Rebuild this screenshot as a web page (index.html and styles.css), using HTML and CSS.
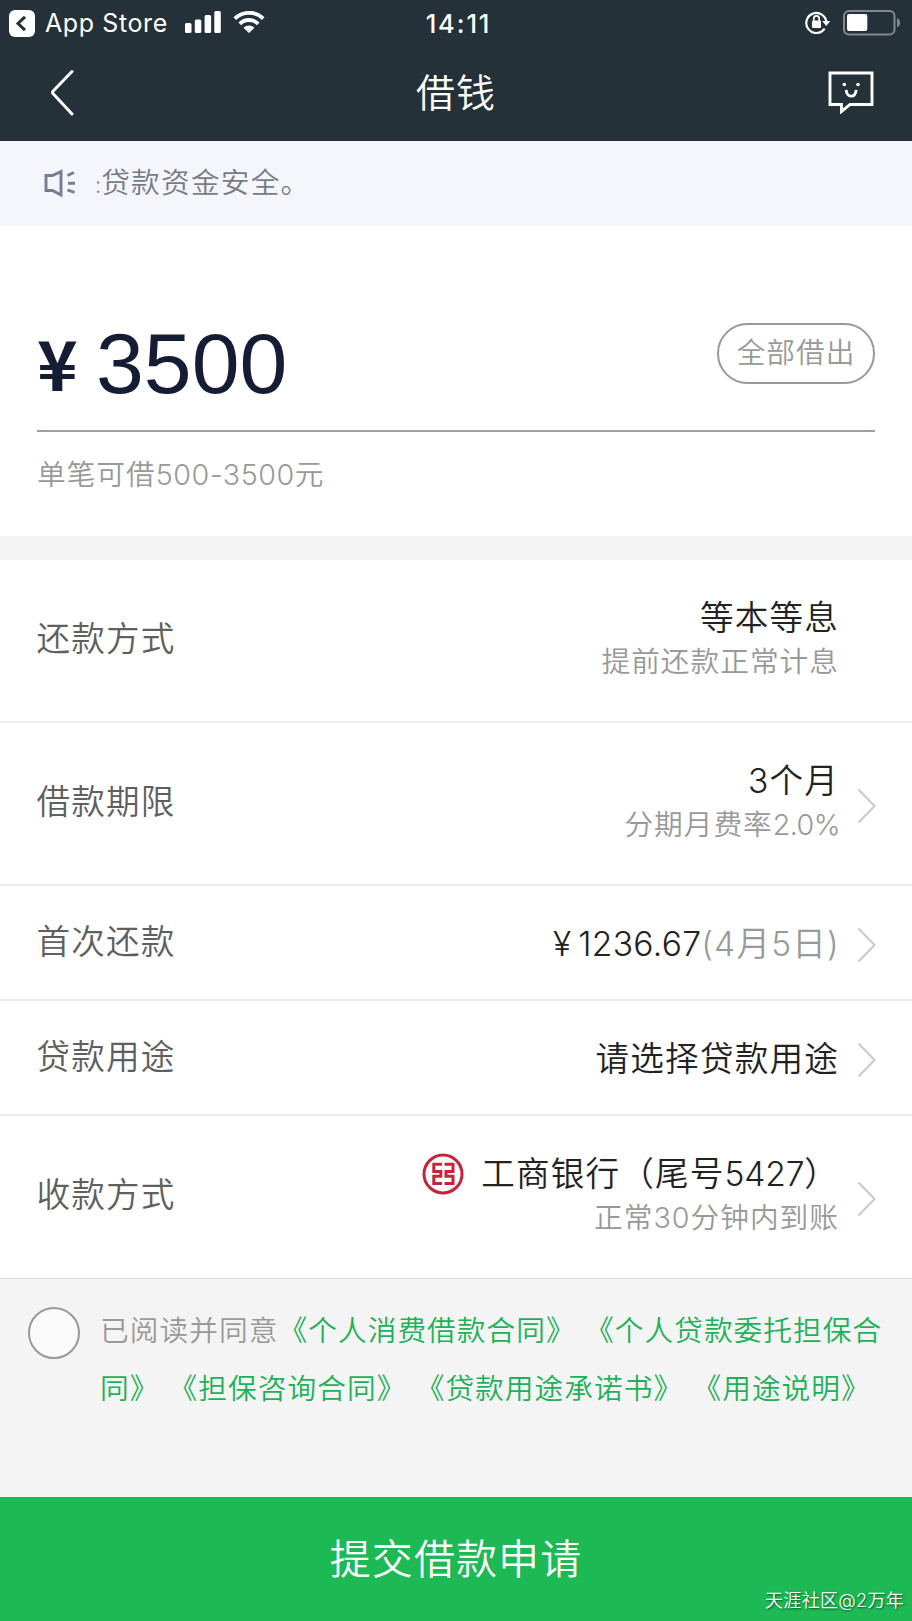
FILE: index.html
```html
<!DOCTYPE html>
<html lang="zh-CN">
<head>
<meta charset="utf-8">
<title>借钱</title>
<link rel="stylesheet" href="styles.css">
</head>
<body>
<div class="page">
  <header class="top">
    <div class="status">
      <div class="status-left">
        <svg class="back-app" viewBox="0 0 26 27" width="26" height="27"><rect width="26" height="27" rx="6" fill="#fff"/><path d="M16 6.8 9 13.5l7 6.7" fill="none" stroke="#253139" stroke-width="3"/></svg>
        <span class="app-name">App Store</span>
        <svg class="signal" viewBox="0 0 36 22" width="36" height="22" fill="#fff"><rect x="0" y="12" width="6.5" height="10" rx="1.5"/><rect x="9.8" y="8.5" width="6.5" height="13.5" rx="1.5"/><rect x="19.6" y="4" width="6.5" height="18" rx="1.5"/><rect x="29.3" y="0" width="6.5" height="22" rx="1.5"/></svg>
        <svg class="wifi" viewBox="0 0 32 22" width="32" height="22"><g fill="none" stroke="#fff" stroke-width="3.8"><path d="M1.8 7.6a20.3 20.3 0 0 1 28.4 0"/><path d="M6.8 12.8a13 13 0 0 1 18.4 0"/></g><path d="M10.5 16.7a7.8 7.8 0 0 1 11 0L16 22z" fill="#fff"/></svg>
      </div>
      <div class="clock">14:11</div>
      <div class="status-right">
        <svg class="lock" viewBox="0 0 26 24" width="26" height="24"><path d="M19.6 18.6a10 10 0 1 1 1.7-6" fill="none" stroke="#fff" stroke-width="2.2"/><path d="M17.2 11h8l-4 5z" fill="#fff"/><rect x="7" y="10.5" width="9" height="7.5" rx="1" fill="#fff"/><path d="M8.8 11V8.6a2.7 2.7 0 0 1 5.4 0V11" fill="none" stroke="#fff" stroke-width="1.7"/></svg>
        <svg class="battery" viewBox="0 0 58 26" width="58" height="26"><rect x="1" y="1" width="50.5" height="23.5" rx="5" fill="none" stroke="#838a8f" stroke-width="2"/><rect x="4" y="4" width="20.3" height="17" rx="2" fill="#fff"/><path d="M54 8.2c4 1.5 4 7.6 0 9.1z" fill="#838a8f"/></svg>
      </div>
    </div>
    <nav class="nav">
      <svg class="nav-back" viewBox="0 0 24 48" width="24" height="48"><path d="M22 2.5 3.2 22a2 2 0 0 0 0 2.8L22 45" fill="none" stroke="#fff" stroke-width="3" stroke-linecap="round"/></svg>
      <h1 class="title">借钱</h1>
      <svg class="chat" viewBox="0 0 46 43" width="46" height="43"><path d="M2 2h42v31.500H22L13.500 40.500v-7H2z" fill="none" stroke="#fff" stroke-width="2.900"/><circle cx="16.300" cy="13.500" r="1.800" fill="#fff"/><circle cx="30" cy="13.500" r="1.800" fill="#fff"/><path d="M18.200 18.800c.5 8.500 9.200 8.500 10 0" fill="none" stroke="#fff" stroke-width="2.800"/></svg>
    </nav>
  </header>

  <div class="notice">
    <svg class="speaker" viewBox="0 0 32 28" width="32" height="28" fill="none" stroke="#777c94" stroke-width="2.900"><path d="M2 6.500H8.500L17 2.500v23.500L8.500 21.500H2z"/><path d="M23.500 6.500 30 3.500M24 14.200h7M23.500 20.800l7 2.700"/></svg>
    <span class="notice-text"><span class="colon">:</span>贷款资金安全。</span>
  </div>

  <section class="amount">
    <div class="amount-line">
      <span class="yen">¥</span>
      <span class="value">3500</span>
      <button class="all">全部借出</button>
    </div>
    <p class="hint">单笔可借<span class="num">500-3500</span>元</p>
  </section>

  <section class="rows">
    <div class="row tall">
      <span class="label">还款方式</span>
      <div class="detail"><div class="main">等本等息</div><div class="sub">提前还款正常计息</div></div>
      <span class="arrow"></span>
    </div>
    <div class="row tall">
      <span class="label">借款期限</span>
      <div class="detail"><div class="main">3个月</div><div class="sub rate">分期月费率<span class="percent">2.0%</span></div></div>
      <svg class="arrow" viewBox="0 0 20 36" width="20" height="36"><path d="M1.500 1.500 17.500 18 1.500 34.500"/></svg>
    </div>
    <div class="row">
      <span class="label">首次还款</span>
      <div class="detail"><div class="main pay"><span class="pay-yen">¥</span><span class="pay-num">1236.67</span><span class="date">(4月5日)</span></div></div>
      <svg class="arrow" viewBox="0 0 20 36" width="20" height="36"><path d="M1.500 1.500 17.500 18 1.500 34.500"/></svg>
    </div>
    <div class="row">
      <span class="label">贷款用途</span>
      <div class="detail"><div class="main">请选择贷款用途</div></div>
      <svg class="arrow" viewBox="0 0 20 36" width="20" height="36"><path d="M1.500 1.500 17.500 18 1.500 34.500"/></svg>
    </div>
    <div class="row tall">
      <span class="label">收款方式</span>
      <div class="detail">
        <div class="main bank">
          <svg class="bank-logo" viewBox="0 0 42 42" width="42" height="42" fill="none" stroke="#c9233a"><circle cx="21" cy="21" r="19" stroke-width="3"/><g stroke-width="3"><path d="M20 11.300H11.800v7.200h7v4.800h-7v7.200H20"/><path d="M22.500 11.300h8.500v7.200h-7v4.800h7v7.200h-8.500"/></g></svg>
          <span>工商银行（尾号<span class="tail">5427</span>）</span>
        </div>
        <div class="sub">正常30分钟内到账</div>
      </div>
      <svg class="arrow" viewBox="0 0 20 36" width="20" height="36"><path d="M1.500 1.500 17.500 18 1.500 34.500"/></svg>
    </div>
  </section>

  <section class="agree">
    <span class="check"></span>
    <p class="terms">已阅读并同意<a>《个人消费借款合同》</a> <a>《个人贷款委托担保合<br>同》</a> <a>《担保咨询合同》</a> <a>《贷款用途承诺书》</a> <a>《用途说明》</a></p>
  </section>

  <footer class="submit">提交借款申请<span class="mark">天涯社区@2万年</span></footer>
</div>
</body>
</html>
```
FILE: styles.css
```css
* { box-sizing: border-box; }
body { margin: 0; background: #fff; }
.page {
  width: 912px; height: 1621px; overflow: hidden;
  display: flex; flex-direction: column;
  font-family: Inter, "Noto Sans CJK SC", sans-serif;
  font-weight: 350; color: #222;
  white-space: nowrap; text-spacing-trim: space-all;
}
svg { display: block; flex: none; }

.top { height: 141px; background: #253139; color: #fff; }
.status { height: 46px; display: grid; grid-template-columns: 1fr auto 1fr; padding: 0 11px 0 9px; }
.status-left { display: flex; align-items: flex-start; }
.back-app { margin-top: 10px; }
.app-name { margin-left: 10px; width: 130px; font-size: 25px; line-height: 47px; font-weight: 400; letter-spacing: 0.6px; }
.signal { margin: 11px 0 0 10px; }
.wifi { margin: 11px 0 0 12px; }
.clock { margin-left: 7px; font-size: 25.500px; line-height: 47px; font-weight: 500; letter-spacing: 1.9px; }
.status-right { display: flex; justify-content: flex-end; }
.lock { margin: 10px 12px 0 0; }
.battery { margin-top: 10px; }
.nav { height: 95px; display: grid; grid-template-columns: 1fr auto 1fr; padding: 0 38px 0 50px; }
.nav-back { margin-top: 23px; }
.title { margin: 0 12px 0 0; font-size: 39px; line-height: 93px; font-weight: 350; letter-spacing: 1px; }
.chat { justify-self: end; margin-top: 25px; }

.notice { height: 85px; background: #f4f6fb; display: flex; padding-left: 44px; color: #777b87; }
.speaker { margin-top: 28px; }
.notice-text { margin-left: 19px; font-size: 28.7px; line-height: 83px; letter-spacing: 1.2px; }
.colon { font-size: 22px; letter-spacing: 0; }

.amount { height: 310px; padding: 0 37px; }
.amount-line { height: 206px; border-bottom: 2px solid #a0a0a4; display: flex; align-items: flex-start; color: #141d33; }
.yen { width: 59px; margin-top: 89px; font: 700 69px/92px "Noto Sans CJK SC", sans-serif; }
.value { flex: 1; margin-top: 87px; font: 400 86px/100px "Liberation Sans", Arial, sans-serif; }
.all { width: 158px; height: 61px; margin-top: 97px; padding: 0 0 6px; border: 2px solid #999; border-radius: 31px; background: none; color: #999; font: inherit; font-size: 28.7px; letter-spacing: 1px; }
.hint { margin: 22px 0 0; font-size: 28.7px; line-height: 42px; letter-spacing: 1px; color: #999; }
.num { letter-spacing: 0.5px; }

.rows { border-top: 24px solid #f4f4f4; }
.row { height: 115px; display: flex; padding: 0 35px 0 36.500px; border-bottom: 2px solid #ececec; }
.row.tall { height: 163px; }
.row:last-child { border-bottom: 1px solid #e0e0e0; }
.label { flex: 1; font-size: 33.600px; line-height: 111px; letter-spacing: 1.200px; color: #5f5f5f; }
.tall .label { line-height: 158px; }
.detail { display: flex; flex-direction: column; align-items: flex-end; margin-right: -1px; }
.main { font-size: 33.600px; line-height: 116px; letter-spacing: 1.200px; }
.tall .main { height: 44px; margin-top: 36px; line-height: 44px; }
.sub { font-size: 28.700px; line-height: 43px; letter-spacing: 1px; color: #999; }
.rate { margin-right: -1px; }
.percent { letter-spacing: -0.600px; }
.pay { display: flex; margin-right: -1px; }
.pay-yen { margin-right: 6px; }
.pay-num { letter-spacing: 0.300px; }
.date { color: #999; }
.bank { display: flex; align-items: center; gap: 17px; }
.tail { letter-spacing: -0.200px; }
.arrow { width: 20px; height: 36px; margin: 41px 0 0 19px; fill: none; stroke: #ccc; stroke-width: 2.200px; }
.tall .arrow { margin-top: 65px; }

.agree { flex: 1; background: #f4f4f4; display: flex; padding-left: 28px; }
.check { width: 52px; height: 52px; margin-top: 28px; border: 2px solid #999; border-radius: 50%; background: #fafafa; }
.terms { margin: 23px 0 0 20px; font-size: 28.700px; line-height: 57.600px; letter-spacing: 1.050px; color: #999; }
.terms a { color: #1db159; }

.submit { position: relative; height: 124px; background: #1cb955; color: #fff; text-align: center; font-size: 41px; line-height: 125px; letter-spacing: 1.100px; }
.mark { position: absolute; right: 8px; bottom: 6px; font-size: 18px; line-height: 28px; letter-spacing: 0.300px; text-shadow: 1px 1px 2px #0a5527; }
```
